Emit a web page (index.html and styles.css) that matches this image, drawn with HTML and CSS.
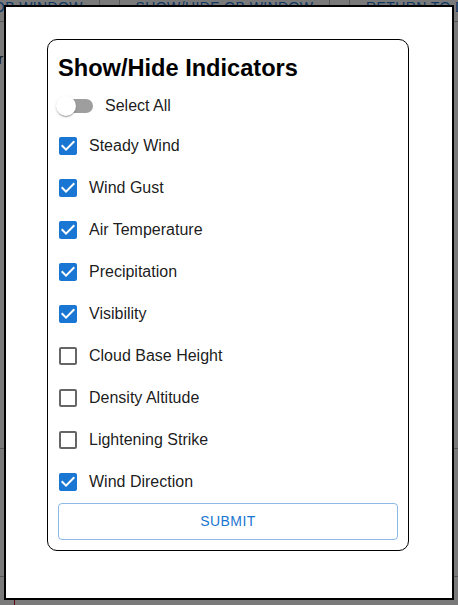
FILE: index.html
```html
<!DOCTYPE html>
<html lang="en">
<head>
<meta charset="utf-8">
<title>Show/Hide Indicators</title>
<link rel="stylesheet" href="styles.css">
</head>
<body>
<div class="page">
  <div class="toolbar">
    <div class="tb-cell tb-first"><span>SHOW/HIDE OB WINDOW</span></div>
    <div class="tb-cell tb-gap"></div>
    <div class="tb-cell tb-mid"><span>SHOW/HIDE OB WINDOW</span></div>
    <div class="tb-cell tb-gap"></div>
    <div class="tb-cell tb-last"><span>RETURN TO DASHBOARD</span></div>
  </div>
  <div class="bg-text">Filter</div>
  <div class="bg-rule bg-rule-1"></div>
  <div class="bg-rule bg-rule-2"></div>
  <div class="bg-red"></div>
</div>

<div class="overlay"></div>

<div class="modal">
  <div class="card">
    <h2 class="title">Show/Hide Indicators</h2>

    <label class="switch-row">
      <span class="switch">
        <span class="switch-track"></span>
        <span class="switch-thumb"></span>
      </span>
      <span class="label">Select All</span>
    </label>

    <label class="check-row">
      <span class="check"><svg viewBox="0 0 24 24" class="icon-on"><path d="M19 3H5c-1.11 0-2 .9-2 2v14c0 1.1.89 2 2 2h14c1.11 0 2-.9 2-2V5c0-1.1-.89-2-2-2zm-9 14l-5-5 1.41-1.41L10 14.170l7.590-7.590L19 8l-9 9z"/></svg></span>
      <span class="label">Steady Wind</span>
    </label>
    <label class="check-row">
      <span class="check"><svg viewBox="0 0 24 24" class="icon-on"><path d="M19 3H5c-1.11 0-2 .9-2 2v14c0 1.1.89 2 2 2h14c1.11 0 2-.9 2-2V5c0-1.1-.89-2-2-2zm-9 14l-5-5 1.41-1.41L10 14.170l7.590-7.590L19 8l-9 9z"/></svg></span>
      <span class="label">Wind Gust</span>
    </label>
    <label class="check-row">
      <span class="check"><svg viewBox="0 0 24 24" class="icon-on"><path d="M19 3H5c-1.11 0-2 .9-2 2v14c0 1.1.89 2 2 2h14c1.11 0 2-.9 2-2V5c0-1.1-.89-2-2-2zm-9 14l-5-5 1.41-1.41L10 14.170l7.590-7.590L19 8l-9 9z"/></svg></span>
      <span class="label">Air Temperature</span>
    </label>
    <label class="check-row">
      <span class="check"><svg viewBox="0 0 24 24" class="icon-on"><path d="M19 3H5c-1.11 0-2 .9-2 2v14c0 1.1.89 2 2 2h14c1.11 0 2-.9 2-2V5c0-1.1-.89-2-2-2zm-9 14l-5-5 1.41-1.41L10 14.170l7.590-7.590L19 8l-9 9z"/></svg></span>
      <span class="label">Precipitation</span>
    </label>
    <label class="check-row">
      <span class="check"><svg viewBox="0 0 24 24" class="icon-on"><path d="M19 3H5c-1.11 0-2 .9-2 2v14c0 1.1.89 2 2 2h14c1.11 0 2-.9 2-2V5c0-1.1-.89-2-2-2zm-9 14l-5-5 1.41-1.41L10 14.170l7.590-7.590L19 8l-9 9z"/></svg></span>
      <span class="label">Visibility</span>
    </label>
    <label class="check-row">
      <span class="check"><svg viewBox="0 0 24 24" class="icon-off"><path d="M19 5v14H5V5h14m0-2H5c-1.1 0-2 .9-2 2v14c0 1.1.9 2 2 2h14c1.1 0 2-.9 2-2V5c0-1.1-.9-2-2-2z"/></svg></span>
      <span class="label">Cloud Base Height</span>
    </label>
    <label class="check-row">
      <span class="check"><svg viewBox="0 0 24 24" class="icon-off"><path d="M19 5v14H5V5h14m0-2H5c-1.1 0-2 .9-2 2v14c0 1.1.9 2 2 2h14c1.1 0 2-.9 2-2V5c0-1.1-.9-2-2-2z"/></svg></span>
      <span class="label">Density Altitude</span>
    </label>
    <label class="check-row">
      <span class="check"><svg viewBox="0 0 24 24" class="icon-off"><path d="M19 5v14H5V5h14m0-2H5c-1.1 0-2 .9-2 2v14c0 1.1.9 2 2 2h14c1.1 0 2-.9 2-2V5c0-1.1-.9-2-2-2z"/></svg></span>
      <span class="label">Lightening Strike</span>
    </label>
    <label class="check-row">
      <span class="check"><svg viewBox="0 0 24 24" class="icon-on"><path d="M19 3H5c-1.11 0-2 .9-2 2v14c0 1.1.89 2 2 2h14c1.11 0 2-.9 2-2V5c0-1.1-.89-2-2-2zm-9 14l-5-5 1.41-1.41L10 14.170l7.590-7.590L19 8l-9 9z"/></svg></span>
      <span class="label">Wind Direction</span>
    </label>

    <button class="submit" type="button">Submit</button>
  </div>
</div>
</body>
</html>
```

FILE: styles.css
```css
* {
  box-sizing: border-box;
}

html,
body {
  margin: 0;
  height: 100%;
}

body {
  font-family: "Liberation Sans", Arial, Helvetica, sans-serif;
  background: #fff;
  overflow: hidden;
}

/* ---------- background page (under the overlay) ---------- */
.page {
  height: 100%;
  display: flex;
  flex-direction: column;
}

.toolbar {
  display: flex;
  height: 30px;
  margin-top: -8px;
  border-bottom: 1px solid #b8b8b8;
  flex: none;
}

.tb-cell {
  display: flex;
  align-items: center;
  height: 100%;
  overflow: hidden;
  white-space: nowrap;
  font-size: 14px;
  letter-spacing: 0.4px;
  line-height: 16px;
  color: #1b76d0;
  border-right: 1px solid #b8b8b8;
}

.tb-cell span {
  display: block;
}

.tb-first {
  width: 100px;
  justify-content: flex-end;
  padding-right: 16px;
}

.tb-gap {
  width: 20px;
}

.tb-mid {
  width: 210px;
  justify-content: center;
}

.tb-last {
  flex: 1;
  padding-left: 16px;
  border-right: none;
}

.bg-text {
  font-size: 15px;
  line-height: 18px;
  margin-top: 28px;
  margin-left: -30px;
  color: #222;
  flex: none;
}

.bg-rule {
  border-top: 1px solid #b8b8b8;
  flex: none;
}

.bg-rule-1 {
  margin-top: 380px;
}

.bg-rule-2 {
  margin-top: 127px;
}

.bg-red {
  flex: 1;
  margin-left: 14px;
  border-left: 1px solid #c8102e;
}

/* ---------- overlay & modal ---------- */
.overlay {
  position: fixed;
  inset: 0;
  background: rgba(0, 0, 0, 0.52);
}

.modal {
  position: fixed;
  top: 5px;
  left: 4px;
  width: 450px;
  height: 595px;
  background: #fff;
  border: 2px solid #000;
  padding: 32px 43px 0 41px;
}

.card {
  border: 1px solid #000;
  border-radius: 10px;
  padding: 10px;
  display: flex;
  flex-direction: column;
}

.title {
  margin: 0;
  font-size: 23.6px;
  font-weight: bold;
  line-height: 37px;
  color: #000;
}

.label {
  font-size: 16px;
  line-height: 24px;
  color: rgba(0, 0, 0, 0.9);
}

/* switch */
.switch-row {
  display: flex;
  align-items: center;
  height: 38px;
  margin-left: -11px;
}

.switch {
  position: relative;
  width: 58px;
  height: 38px;
  padding: 12px;
  flex: none;
}

.switch-track {
  display: block;
  width: 34px;
  height: 14px;
  border-radius: 7px;
  background: #9e9e9e;
}

.switch-thumb {
  position: absolute;
  top: 9px;
  left: 9px;
  width: 20px;
  height: 20px;
  border-radius: 50%;
  background: #fff;
  box-shadow: 0 2px 1px -1px rgba(0, 0, 0, 0.2), 0 1px 1px 0 rgba(0, 0, 0, 0.14), 0 1px 3px 0 rgba(0, 0, 0, 0.12);
}

/* checkboxes */
.check-row {
  display: flex;
  align-items: center;
  height: 42px;
  margin-left: -11px;
}

.check {
  width: 42px;
  height: 42px;
  padding: 9px;
  flex: none;
}

.check svg {
  display: block;
  width: 24px;
  height: 24px;
}

.icon-on {
  fill: #1976d2;
}

.icon-off {
  fill: rgba(0, 0, 0, 0.6);
}

/* submit */
.submit {
  display: block;
  width: 100%;
  height: 36.5px;
  padding: 5px 15px;
  border: 1px solid rgba(25, 118, 210, 0.5);
  border-radius: 4px;
  background: transparent;
  color: #1976d2;
  font-family: "Liberation Sans", Arial, Helvetica, sans-serif;
  font-size: 14px;
  font-weight: 500;
  letter-spacing: 0.02857em;
  text-transform: uppercase;
  line-height: 24.5px;
}
```
